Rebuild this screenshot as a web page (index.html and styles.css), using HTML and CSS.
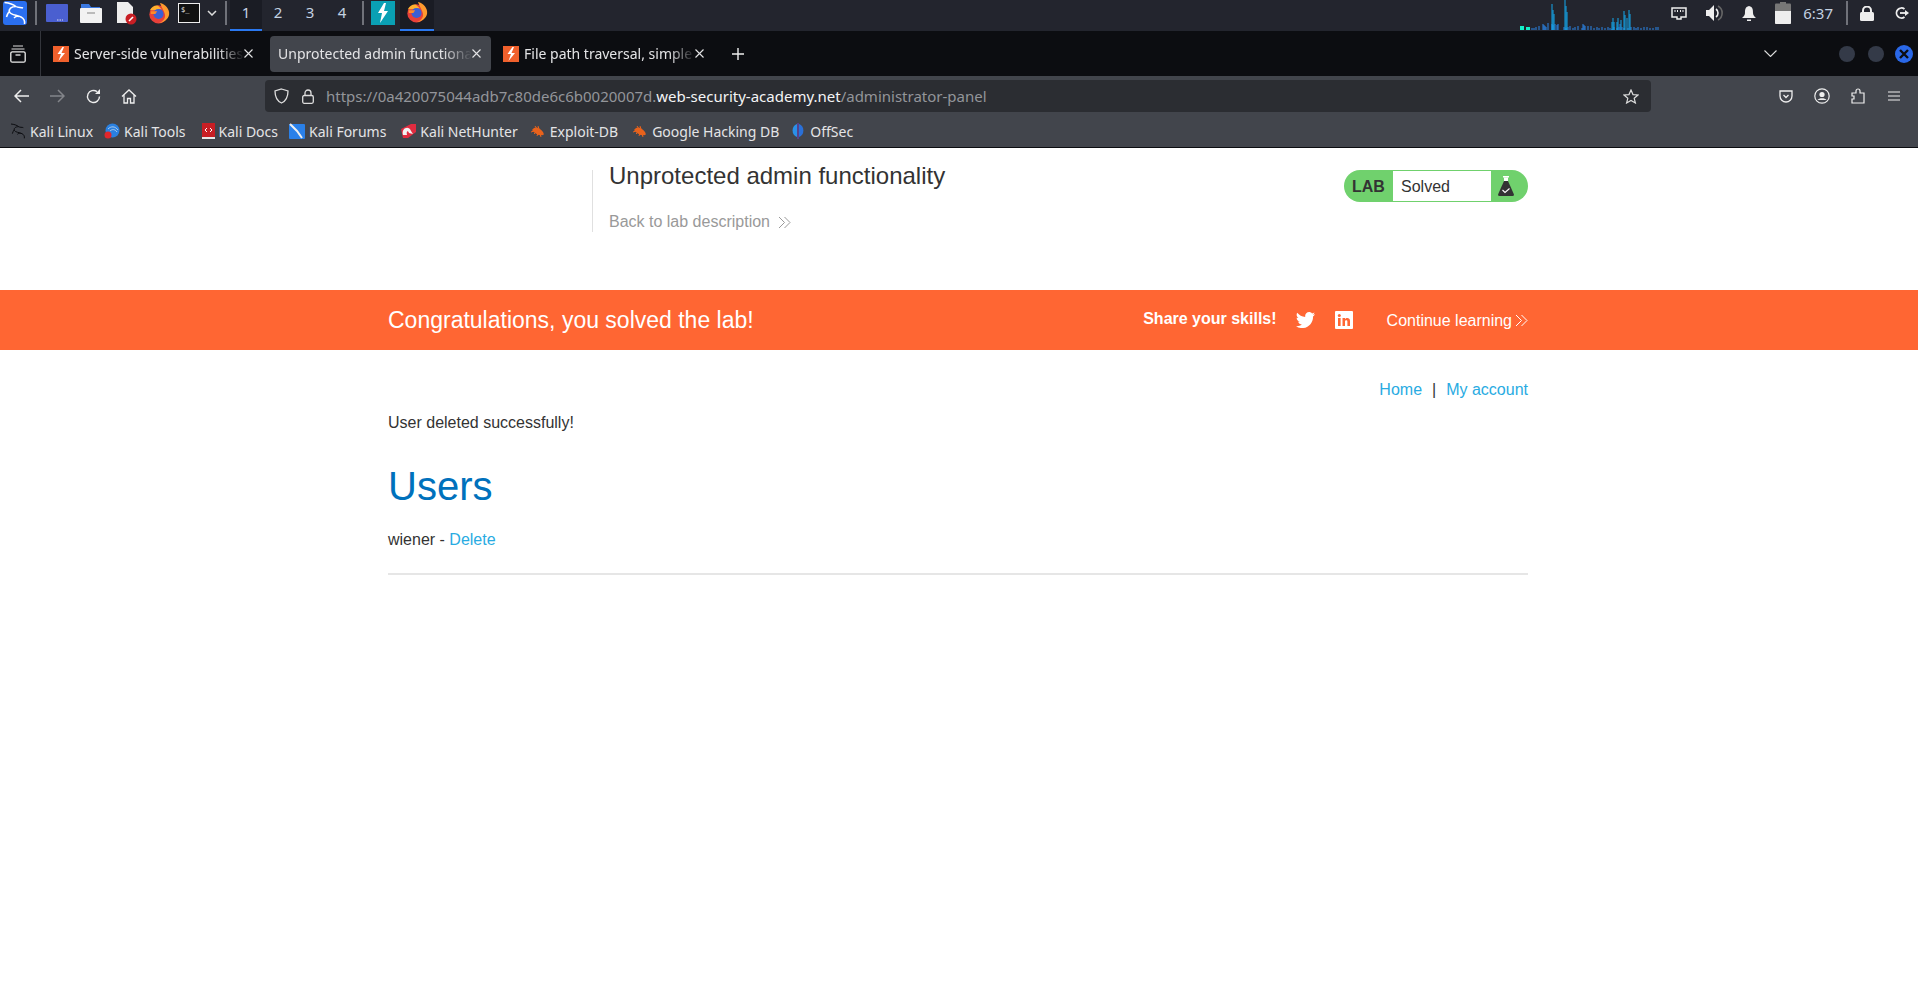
FILE: index.html
```html
<!DOCTYPE html>
<html lang="en">
<head>
    <meta charset="UTF-8">
    <title>Unprotected admin functionality</title>
    <link rel="stylesheet" href="styles.css">
</head>
<body>
    <!-- Shared icons -->
    <svg class="defs">
        <symbol id="i-bolt" viewBox="0 0 16 16">
            <rect width="16" height="16" fill="#f0602c"/>
            <path d="M9.5 1 L4.5 8 H8 L5.5 15 L12 7 H8.5 L11 1 Z" fill="#fff"/>
        </symbol>
        <symbol id="i-fox" viewBox="0 0 24 24">
            <circle cx="11.5" cy="13.5" r="10" fill="#e8403a"/>
            <path d="M13 1 C19 2 24 8 23 14 C22 19 17 23 12 23 C17 21 20 17 18 12 C17 9 15 6 13 1 Z" fill="#ff9a2e"/>
            <path d="M2 9 C4 5 8 3 11 4 L15 8 L7 9 Z" fill="#ffb02e"/>
            <circle cx="11.5" cy="13" r="5.5" fill="#3c5fd6"/>
            <path d="M3 10 H10 L8 13 H3 Z" fill="#ff8a2a"/>
        </symbol>
        <symbol id="i-dragon" viewBox="0 0 24 24">
            <path d="M1.5 1.500 C6 2 10 3 13 5.500 C15 7 18 6 20 7 M13 5.500 C8 5.500 5.500 8 6.500 11 C7.500 14 14 14 18 16 C21 17.500 22 20 21.500 23 M6.500 10 C5 12 4 14 3.500 16 M16 15.500 C14 15 12 16 11 17" fill="none" stroke="currentColor" stroke-width="1.500"/>
        </symbol>
        <symbol id="i-bug" viewBox="0 0 16 16">
            <path d="M2 7 C5 3 9 4 13 9 C14 11 14 12 13 12 C9 13 5 11 2 7 Z" fill="#e8621c"/>
            <path d="M5 3 L7 6 M8 3 L9 6 M4 11 L6 9 M7 13 L8 10 M11 14 L10 11 M1 9 L4 8" stroke="#e8621c"/>
        </symbol>
        <symbol id="i-chevrons" viewBox="0 0 13 13">
            <path d="M1 1 L6.500 6.500 L1 12 M6.500 1 L12 6.500 L6.500 12" fill="none" stroke="currentColor" stroke-width="1"/>
        </symbol>
        <symbol id="i-close" viewBox="0 0 9 9">
            <path d="M.5 .5 L8.500 8.500 M8.500 .5 L.5 8.500" stroke="#e4e4e6" stroke-width="1.100"/>
        </symbol>
    </svg>

    <!-- Desktop panel -->
    <div class="panel">
        <div class="panel-start">
            <span class="kali-btn"><svg width="24" height="24"><use href="#i-dragon"/></svg></span>
            <span class="panel-sep sep-first"></span>
            <svg class="launcher l-desk" width="22" height="18" viewBox="0 0 22 18"><rect width="22" height="18" rx="1" fill="#4a5fd0"/><path d="M11 16 H17" stroke="#dde" stroke-dasharray="1.5 1"/></svg>
            <svg class="launcher l-files" width="22" height="20" viewBox="0 0 22 20"><path d="M1 1 H9 L11 4 H20 V8 H1 Z" fill="#3a78e0"/><rect y="5" width="22" height="15" rx="1" fill="#f2f2f2"/><rect x="7" y="9" width="8" height="2" fill="#bbb"/></svg>
            <svg class="launcher l-doc" width="22" height="24" viewBox="0 0 22 24"><path d="M1 1 H12 L17 6 V22 H1 Z" fill="#eee"/><circle cx="15" cy="18" r="5.5" fill="#c81e24"/><path d="M13 20 L17 16" stroke="#fff" stroke-width="1.6"/></svg>
            <svg class="launcher l-fox" width="22" height="22"><use href="#i-fox"/></svg>
            <svg class="launcher l-term" width="22" height="20" viewBox="0 0 22 20"><rect x=".5" y=".5" width="21" height="19" fill="#111" stroke="#eee"/><text x="3" y="9" class="term-text">$_</text></svg>
            <svg class="launcher l-caret" width="10" height="6" viewBox="0 0 10 6"><path d="M1 1 L5 5 L9 1" fill="none" stroke="#ddd" stroke-width="1.5"/></svg>
            <span class="panel-sep sep-work"></span>
            <div class="workspaces">
                <span class="ws ws-active">1</span>
                <span class="ws">2</span>
                <span class="ws">3</span>
                <span class="ws">4</span>
            </div>
            <span class="panel-sep sep-apps"></span>
            <span class="task-burp"><svg width="12" height="20" viewBox="0 0 12 20"><path d="M7 0 L1 10 H5 L3 20 L11 8 H7 L9 0 Z" fill="#fff"/></svg></span>
            <span class="task-fox"><svg width="22" height="22"><use href="#i-fox"/></svg></span>
        </div>
        <div class="panel-end">
            <svg class="graph" width="140" height="31" viewBox="0 0 140 31">
                <rect x="0" y="26" width="4" height="4" fill="#14f0c8"/>
                <rect x="6" y="27" width="4" height="3" fill="#14f0c8"/>
                <path d="M12 30V28M14 30V28M16 30V27M19 30V26M23 30V24M24 30V25M25 30V26M26 30V27M28 30V23M32 30V24M33 30V25M35 30V24M37 30V25M38 30V24M44 30V27M46 30V28M48 30V27M50 30V26M53 30V28M55 30V27M58 30V26M62 30V28M63 30V24M64 30V25M65 30V26M68 30V26M71 30V26M74 30V28M77 30V27M79 30V28M82 30V27M85 30V28M88 30V27M90 30V28M92 30V29M94 30V27M97 30V28M99 30V27M100 30V24M102 30V27M104 30V28M108 30V28M111 30V27M114 30V27M116 30V28M118 30V27M121 30V28M124 30V27M127 30V27M130 30V28M133 30V28M136 30V27M138 30V27" stroke="#2a86e8" fill="none"/>
                <path d="M32 30V4M33 30V10M34 30V14M45 30V0M46 30V6M47 30V12M92 30V22M93 30V18M94 30V22M97 30V22M98 30V18M101 30V20M104 30V11M105 30V15M107 30V18M109 30V10M110 30V14" stroke="#14a8ec" fill="none"/>
            </svg>
            <svg class="tray t-net" width="16" height="13" viewBox="0 0 16 13"><path d="M1 1 H15 V10 H10 V12 H6 V10 H1 Z" fill="none" stroke="#eee" stroke-width="1.5"/><path d="M4 3 V5 M6.500 3 V5 M9.500 3 V5 M12 3 V5" stroke="#eee"/></svg>
            <svg class="tray t-vol" width="18" height="16" viewBox="0 0 18 16"><path d="M0 5 H3 L8 0 V16 L3 11 H0 Z" fill="#eee"/><path d="M10 4 A5 5 0 0 1 10 12" fill="none" stroke="#eee" stroke-width="1.600"/><path d="M12 1 A8 8 0 0 1 12 15" fill="none" stroke="#666" stroke-width="1.600"/></svg>
            <svg class="tray t-bell" width="14" height="15" viewBox="0 0 14 15"><path d="M7 0 C3 1 3 4 3 7 C3 9 2 10 0 12 H14 C12 10 11 9 11 7 C11 4 11 1 7 0 Z" fill="#eee"/><rect x="5" y="13.500" width="4" height="1.500" fill="#eee"/></svg>
            <svg class="tray t-bat" width="16" height="22" viewBox="0 0 16 22"><rect x="5" y="0" width="6" height="2" fill="#777"/><rect y="1.500" width="16" height="20.500" rx="1" fill="#777"/><path d="M0 9 H16 V21 A1 1 0 0 1 15 22 H1 A1 1 0 0 1 0 21 Z" fill="#eee"/></svg>
            <span class="clock">6:37</span>
            <span class="panel-sep sep-clock"></span>
            <svg class="tray t-lock" width="14" height="15" viewBox="0 0 14 15"><rect y="6" width="14" height="9" rx="1.500" fill="#eee"/><path d="M3 7 V4.500 A4 4 0 0 1 11 4.500 V7" fill="none" stroke="#eee" stroke-width="2"/></svg>
            <svg class="tray t-exit" width="15" height="12" viewBox="0 0 15 12"><path d="M9.500 2 A5 5 0 1 0 9.500 10" fill="none" stroke="#eee" stroke-width="1.800"/><path d="M5 6 H12" stroke="#eee" stroke-width="1.800"/><path d="M10 3 L14 6 L10 9 Z" fill="#eee"/></svg>
        </div>
    </div>

    <!-- Firefox tab bar -->
    <div class="tabbar">
        <div class="tab-manager">
            <svg width="16" height="18" viewBox="0 0 16 18"><path d="M3 1 H13 M1.500 4 H14.500" stroke="#ddd" stroke-width="1"/><rect x=".8" y="6.800" width="14.400" height="10.400" rx="1.500" fill="none" stroke="#eee" stroke-width="1.300"/><path d="M5.500 10 H10.500" stroke="#eee" stroke-width="1.300"/></svg>
        </div>
        <div class="tab tab-one">
            <svg class="favicon" width="16" height="16"><use href="#i-bolt"/></svg>
            <span class="tab-label">Server-side vulnerabilities</span>
            <svg class="tab-close" width="9" height="9"><use href="#i-close"/></svg>
        </div>
        <div class="tab tab-selected">
            <span class="tab-label">Unprotected admin functiona</span>
            <svg class="tab-close" width="9" height="9"><use href="#i-close"/></svg>
        </div>
        <div class="tab tab-three">
            <svg class="favicon" width="16" height="16"><use href="#i-bolt"/></svg>
            <span class="tab-label">File path traversal, simple</span>
            <svg class="tab-close" width="9" height="9"><use href="#i-close"/></svg>
        </div>
        <svg class="tab-new" width="12" height="12" viewBox="0 0 12 12"><path d="M6 0 V12 M0 6 H12" stroke="#eee" stroke-width="1.400"/></svg>
        <div class="tabbar-end">
            <svg class="tab-list" width="13" height="7" viewBox="0 0 13 7"><path d="M.5 .5 L6.500 6.500 L12.500 .5" fill="none" stroke="#ddd" stroke-width="1.100"/></svg>
            <span class="win-btn"></span>
            <span class="win-btn"></span>
            <span class="win-btn win-close"><svg width="10" height="10" viewBox="0 0 10 10"><path d="M1 1 L9 9 M9 1 L1 9" stroke="#0c0d11" stroke-width="2.400"/></svg></span>
        </div>
    </div>

    <!-- Address bar -->
    <div class="toolbar">
        <svg class="nav nav-back" width="16" height="14" viewBox="0 0 16 14"><path d="M15 7 H1.500 M7 1 L1 7 L7 13" fill="none" stroke="#eee" stroke-width="1.500"/></svg>
        <svg class="nav nav-forward" width="16" height="14" viewBox="0 0 16 14"><path d="M1 7 H14.500 M9 1 L15 7 L9 13" fill="none" stroke="#83858a" stroke-width="1.500"/></svg>
        <svg class="nav nav-reload" width="15" height="15" viewBox="0 0 15 15"><path d="M13.500 7.500 A6 6 0 1 1 11 2.600" fill="none" stroke="#eee" stroke-width="1.400"/><path d="M14 0 V5 H9 Z" fill="#eee"/></svg>
        <svg class="nav nav-home" width="16" height="15" viewBox="0 0 16 15"><path d="M1 7.500 L8 1 L15 7.500 M3 6 V14 H6.500 V9.500 H9.500 V14 H13 V6" fill="none" stroke="#eee" stroke-width="1.300"/></svg>
        <div class="urlbar">
            <svg class="url-shield" width="15" height="16" viewBox="0 0 15 16"><path d="M7.500 1 L14 3 C14 9 12 13 7.500 15 C3 13 1 9 1 3 Z" fill="none" stroke="#ddd" stroke-width="1.300"/></svg>
            <svg class="url-lock" width="12" height="15" viewBox="0 0 12 15"><rect x=".7" y="6.500" width="10.600" height="7.800" rx="1.500" fill="none" stroke="#ddd" stroke-width="1.300"/><path d="M3 6.500 V4 A3 3 0 0 1 9 4 V6.500" fill="none" stroke="#ddd" stroke-width="1.300"/></svg>
            <span class="url-text">https://0a420075044adb7c80de6c6b0020007d.<b>web-security-academy.net</b>/administrator-panel</span>
            <svg class="url-star" width="16" height="15" viewBox="0 0 16 15"><path d="M8 1 L10 5.600 L15 6 L11.200 9.300 L12.400 14 L8 11.500 L3.600 14 L4.800 9.300 L1 6 L6 5.600 Z" fill="none" stroke="#ddd" stroke-width="1.200"/></svg>
        </div>
        <svg class="tool t-pocket" width="14" height="13" viewBox="0 0 14 13"><path d="M1 1 H13 V6 A6 6 0 0 1 1 6 Z" fill="none" stroke="#eee" stroke-width="1.300"/><path d="M4.500 5 L7 7.500 L9.500 5" fill="none" stroke="#eee" stroke-width="1.300"/></svg>
        <svg class="tool t-user" width="16" height="16" viewBox="0 0 16 16"><circle cx="8" cy="8" r="7.200" fill="none" stroke="#eee" stroke-width="1.200"/><circle cx="8" cy="6.500" r="2.600" fill="#eee"/><path d="M3.500 12 C5 9.500 11 9.500 12.500 12 Z" fill="#eee"/></svg>
        <svg class="tool t-puzzle" width="14" height="16" viewBox="0 0 14 16"><path d="M1 15 V11 H3 V8 H1 V5 H5 V3 A2 2 0 0 1 9 3 V5 H13 V15 Z" fill="none" stroke="#eee" stroke-width="1.200"/></svg>
        <svg class="tool t-menu" width="12" height="10" viewBox="0 0 12 10"><path d="M0 1 H12 M0 5 H12 M0 9 H12" stroke="#eee" stroke-width="1.100"/></svg>
    </div>

    <!-- Bookmarks -->
    <div class="bookmarks">
        <a class="bm bm-linux" href="#"><svg class="bm-dragon" width="16" height="16"><use href="#i-dragon"/></svg>Kali Linux</a>
        <a class="bm bm-tools" href="#"><svg width="16" height="16" viewBox="0 0 16 16"><circle cx="8.500" cy="7.500" r="7" fill="#2a80e0"/><path d="M4 6 C7 3 11 3 14 7 M6 8 C8 6 11 6 13 9" fill="none" stroke="#cde" stroke-width=".8"/><circle cx="4" cy="12" r="3.500" fill="#e0262c"/></svg>Kali Tools</a>
        <a class="bm bm-docs" href="#"><svg width="13" height="16" viewBox="0 0 13 16"><rect width="13" height="14" fill="#c81e24"/><rect y="14" width="13" height="2" fill="#e8e8e8"/><path d="M5 5 L3 7 L5 9 M8 5 L10 7 L8 9" fill="none" stroke="#fff"/></svg>Kali Docs</a>
        <a class="bm bm-forums" href="#"><svg width="16" height="16" viewBox="0 0 16 16"><rect y="1" width="16" height="15" rx="1" fill="#2a80e8"/><path d="M1 1 L8 8 L13 15" fill="none" stroke="#eee" stroke-width="2"/></svg>Kali Forums</a>
        <a class="bm bm-hunter" href="#"><svg width="16" height="16" viewBox="0 0 16 16"><path d="M1 6 L11 1 H16 V9 L8 15 H3 Z" fill="#e02c40"/><path d="M3 12 C1 5 9 2 11 8 L13 11 L9 10 C8 7 6 8 7 12 Z" fill="#f2f2f2"/></svg>Kali NetHunter</a>
        <a class="bm bm-exploit" href="#"><svg width="16" height="16"><use href="#i-bug"/></svg>Exploit-DB</a>
        <a class="bm bm-ghdb" href="#"><svg width="16" height="16"><use href="#i-bug"/></svg>Google Hacking DB</a>
        <a class="bm bm-offsec" href="#"><svg width="16" height="16" viewBox="0 0 16 16"><path d="M7 1 A7 7 0 0 0 7 14 Z" fill="#2a90e8"/><path d="M9 1 A7 7 0 0 1 9 14 Z" fill="#2a70d8"/><path d="M8 0 V16" stroke="#6a40c8" stroke-width="1"/></svg>OffSec</a>
    </div>

    <!-- Lab header -->
    <div class="page">
        <div class="lab-header">
            <div class="lab-title">
                <h2>Unprotected admin functionality</h2>
                <a class="back-link" href="#">Back to lab description <svg class="chev" width="13" height="13"><use href="#i-chevrons"/></svg></a>
            </div>
            <div class="lab-status">
                <span class="lab-tag">LAB</span>
                <span class="lab-state">Solved</span>
                <span class="lab-flask">
                    <svg width="16" height="20" viewBox="0 0 16 20"><rect x="5" y="0" width="6" height="1.500" fill="#fff"/><rect x="6" y="1.500" width="4" height="5" fill="#fff"/><path d="M6 5 H10 L16 18.500 Q16 20 14.500 20 H1.500 Q0 20 0 18.500 Z" fill="#333"/><path d="M4.500 14 L7 16.500 L11.500 12.500" fill="none" stroke="#fff" stroke-width="1.100"/></svg>
                </span>
            </div>
        </div>

        <div class="solved-banner">
            <div class="banner-inner">
                <h4>Congratulations, you solved the lab!</h4>
                <div class="banner-share">
                    <span class="share-text">Share your skills!</span>
                    <svg class="share-twitter" width="19" height="16" viewBox="0 0 24 20"><path d="M24 2.400 C23.100 2.800 22.200 3.100 21.200 3.200 C22.200 2.600 23 1.600 23.400 .5 C22.400 1 21.400 1.500 20.300 1.700 C19.400 .7 18.100 0 16.600 0 C13.300 0 10.900 3 11.700 6.100 C7.600 5.900 3.900 3.900 1.500 .9 C.2 3.200 .8 6.100 3.100 7.600 C2.300 7.600 1.500 7.400 .8 7 C.8 9.400 2.500 11.600 4.900 12.100 C4.200 12.300 3.400 12.300 2.700 12.200 C3.300 14.200 5.200 15.700 7.400 15.800 C5.200 17.500 2.500 18.200 0 17.900 C2.200 19.300 4.900 20.200 7.500 20.200 C16.600 20.200 21.800 12.500 21.500 5.500 C22.500 4.800 23.300 3.700 24 2.400 Z" fill="#fff"/></svg>
                    <svg class="share-linkedin" width="18" height="18" viewBox="0 0 18 18"><rect width="18" height="18" rx="1" fill="#fff"/><rect x="3" y="7" width="2.600" height="8" fill="#ff6633"/><circle cx="4.300" cy="4.500" r="1.500" fill="#ff6633"/><path d="M7.500 7 H10 V8.200 C11 6.500 15 6.300 15 10 V15 H12.400 V10.700 C12.400 8.800 10 8.900 10 10.700 V15 H7.500 Z" fill="#ff6633"/></svg>
                    <a class="continue-link" href="#">Continue learning <svg class="chev" width="13" height="13"><use href="#i-chevrons"/></svg></a>
                </div>
            </div>
        </div>

        <div class="container">
            <div class="top-links">
                <a href="#">Home</a><span class="link-sep">|</span><a href="#">My account</a>
            </div>
            <p class="flash">User deleted successfully!</p>
            <h1>Users</h1>
            <div class="user-row">wiener - <a href="#">Delete</a></div>
            <hr>
        </div>
    </div>
</body>
</html>
```

FILE: styles.css
```css
* {
    box-sizing: border-box;
}

html, body {
    margin: 0;
    height: 100%;
    overflow: hidden;
}

body {
    background-color: #fff;
    font-family: "Liberation Sans", Arial, sans-serif;
    font-size: 16px;
    color: #333;
}

.defs {
    display: none;
}

svg {
    flex: none;
    display: block;
}

/* Desktop panel */
.panel {
    height: 31px;
    background-color: #23252e;
    display: flex;
    justify-content: space-between;
    font-family: "Noto Sans", sans-serif;
    color: #c4d2e2;
}

.panel-start, .panel-end {
    display: flex;
    align-items: center;
    padding-bottom: 5px;
}

.kali-btn {
    width: 24px;
    height: 24px;
    margin-left: 3px;
    background-color: #2a6ff0;
    border-radius: 3px;
    color: #fff;
}

.panel-sep {
    width: 2px;
    height: 24px;
    background-color: #70727a;
}

.sep-first { margin-left: 8px; }
.launcher { margin-left: 10px; }
.l-desk { margin-left: 9px; }
.l-files { margin-left: 12px; }
.l-doc { margin-left: 14px; }
.l-fox { margin-left: 10px; }
.l-term { margin-left: 8px; }
.l-caret { margin-left: 7px; }
.sep-work { margin-left: 8px; }

.term-text {
    font-family: "DejaVu Sans Mono", monospace;
    font-size: 7px;
    fill: #eee;
}

.workspaces {
    display: flex;
    height: 31px;
    margin: 0 0 -5px 3px;
}

.ws {
    width: 32px;
    height: 31px;
    line-height: 25px;
    text-align: center;
    font-size: 15px;
}

.ws-active {
    background-color: #1a1c24;
    border-bottom: 2px solid #2a78f0;
}

.sep-apps { margin-left: 4px; }

.task-burp {
    width: 24px;
    height: 24px;
    margin-left: 7px;
    background-color: #0aa0b4;
    display: flex;
    align-items: center;
    justify-content: center;
}

.task-fox {
    width: 34px;
    height: 31px;
    margin: 0 0 -5px 5px;
    background-color: #1a1c24;
    border-bottom: 2px solid #2a78f0;
    display: flex;
    align-items: center;
    justify-content: center;
    padding-bottom: 5px;
}

.graph { margin: 0 9px -5px 0; }
.tray { display: block; }
.t-net { margin-left: 2px; }
.t-vol { margin-left: 19px; }
.t-bell { margin-left: 18px; }
.t-bat { margin-left: 19px; }

.clock {
    margin-left: 12px;
    font-size: 15px;
}

.sep-clock { margin-left: 13px; }
.t-lock { margin-left: 12px; }
.t-exit { margin-left: 21px; margin-right: 8px; }

/* Tab bar */
.tabbar {
    height: 45px;
    background-color: #0c0d11;
    display: flex;
    align-items: center;
    font-family: "Noto Sans", sans-serif;
    font-size: 14px;
    color: #e4e4e6;
}

.tab-manager {
    width: 41px;
    height: 45px;
    border-right: 1px solid #33353b;
    display: flex;
    align-items: center;
    padding-left: 10px;
}

.tab {
    height: 36px;
    display: flex;
    align-items: center;
    border-radius: 4px;
}

.tab-one {
    width: 206px;
    margin-left: 12px;
    padding-right: 6px;
}

.tab-selected {
    width: 221px;
    margin-left: 11px;
    padding: 0 12px 0 8px;
    background-color: #42454c;
}

.tab-three {
    width: 205px;
    margin-left: 12px;
    padding-right: 4px;
}

.favicon { margin-right: 5px; }

.tab-label {
    flex: 1;
    white-space: nowrap;
    -webkit-mask-image: linear-gradient(to right, #000 85%, transparent);
    mask-image: linear-gradient(to right, #000 85%, transparent);
}

.tab-new { margin-left: 24px; }

.tabbar-end {
    margin-left: auto;
    display: flex;
    align-items: center;
    padding-right: 5px;
}

.tab-list { margin-right: 62px; }

.win-btn {
    width: 16px;
    height: 16px;
    margin-left: 13px;
    border-radius: 50%;
    background-color: #343a48;
    display: flex;
    align-items: center;
    justify-content: center;
}

.win-btn:first-of-type { margin-left: 0; }

.win-close {
    width: 18px;
    height: 18px;
    margin-left: 11px;
    background-color: #2a68e8;
}

/* Toolbar */
.toolbar {
    height: 36px;
    padding-top: 4px;
    background-color: #42454c;
    display: flex;
    align-items: center;
    font-family: "Noto Sans", sans-serif;
}

.nav-back { margin-left: 14px; }
.nav-forward { margin-left: 19px; }
.nav-reload { margin-left: 21px; }
.nav-home { margin-left: 20px; }

.urlbar {
    width: 1386px;
    height: 32px;
    margin-left: 128px;
    padding: 0 12px 0 9px;
    background-color: #2b2d32;
    border-radius: 4px;
    display: flex;
    align-items: center;
    font-size: 15px;
    color: #93959a;
}

.url-lock { margin-left: 13px; }

.url-text {
    margin-left: 12px;
    white-space: nowrap;
}

.url-text b {
    font-weight: normal;
    color: #f4f4f5;
}

.url-star { margin-left: auto; }

.tool { display: block; }
.t-pocket { margin-left: 128px; }
.t-user { margin-left: 21px; }
.t-puzzle { margin-left: 21px; }
.t-menu { margin-left: 23px; }

/* Bookmarks */
.bookmarks {
    height: 36px;
    padding: 3px 0 0 10px;
    background-color: #42454c;
    border-bottom: 1px solid #0c0d11;
    display: flex;
    align-items: center;
    font-family: "Noto Sans", sans-serif;
    font-size: 14px;
}

.bm {
    display: flex;
    align-items: center;
    gap: 4px;
    color: #e4e4e6;
    text-decoration: none;
}

.bm-dragon { color: #0c0d11; }
.bm-tools { margin-left: 11px; }
.bm-docs { margin-left: 16px; }
.bm-forums { margin-left: 11px; }
.bm-hunter { margin-left: 14px; }
.bm-exploit { margin-left: 12px; }
.bm-ghdb { margin-left: 14px; }
.bm-offsec { margin-left: 11px; }

/* Lab header */
.lab-header {
    width: 1142px;
    height: 142px;
    margin: 0 auto;
    padding: 0 2px 0 204px;
    display: flex;
    justify-content: space-between;
    align-items: flex-start;
}

.lab-title {
    margin-top: 22px;
    height: 62px;
    padding-left: 16px;
    border-left: 1px solid #e0e0e0;
}

.lab-title h2 {
    margin: -10px 0 0;
    font-size: 24px;
    font-weight: normal;
    line-height: 32px;
}

.back-link {
    display: flex;
    align-items: center;
    gap: 4px;
    margin-top: 21px;
    color: #999;
    text-decoration: none;
}

.back-link .chev {
    margin-left: 4px;
}

.lab-status {
    width: 184px;
    height: 32px;
    margin-top: 22px;
    padding: 1px 0;
    background-color: #70d16d;
    border-radius: 16px;
    display: flex;
    align-items: center;
}

.lab-tag {
    width: 49px;
    padding: 2px 0 0 8px;
    font-weight: bold;
}

.lab-state {
    width: 98px;
    height: 30px;
    padding-left: 8px;
    line-height: 31px;
    background-color: #fff;
}

.lab-flask {
    flex: 1;
    display: flex;
    justify-content: center;
    padding-right: 8px;
}

/* Solved banner */
.solved-banner {
    height: 60px;
    background-color: #ff6633;
    color: #fff;
}

.banner-inner {
    width: 1142px;
    height: 60px;
    margin: 0 auto;
    padding-right: 2px;
    display: flex;
    align-items: center;
    justify-content: space-between;
}

.banner-inner h4 {
    margin: 0;
    font-size: 23px;
    font-weight: normal;
}

.banner-share {
    display: flex;
    align-items: center;
}

.share-text {
    font-weight: bold;
    margin-bottom: 2px;
}

.share-twitter { margin-left: 19px; }
.share-linkedin { margin-left: 20px; }

.continue-link {
    display: flex;
    align-items: center;
    gap: 3px;
    margin: 1px 0 0 34px;
    color: #fff;
    text-decoration: none;
}

/* Main content */
.container {
    width: 1142px;
    margin: 0 auto;
    padding-right: 2px;
}

.container a {
    color: #29abe2;
    text-decoration: none;
}

.top-links {
    display: flex;
    justify-content: flex-end;
    padding-top: 31px;
    line-height: 18px;
}

.link-sep {
    margin: 0 10px;
}

.flash {
    margin: 15px 0 0;
    line-height: 18px;
}

h1 {
    margin: 31px 0 0;
    font-size: 40px;
    font-weight: normal;
    line-height: 46px;
    color: #0071bc;
}

.user-row {
    margin-top: 22px;
    line-height: 18px;
}

hr {
    margin: 24px 0 0;
    height: 2px;
    border: 0;
    background-color: #e6e6e6;
}
```
